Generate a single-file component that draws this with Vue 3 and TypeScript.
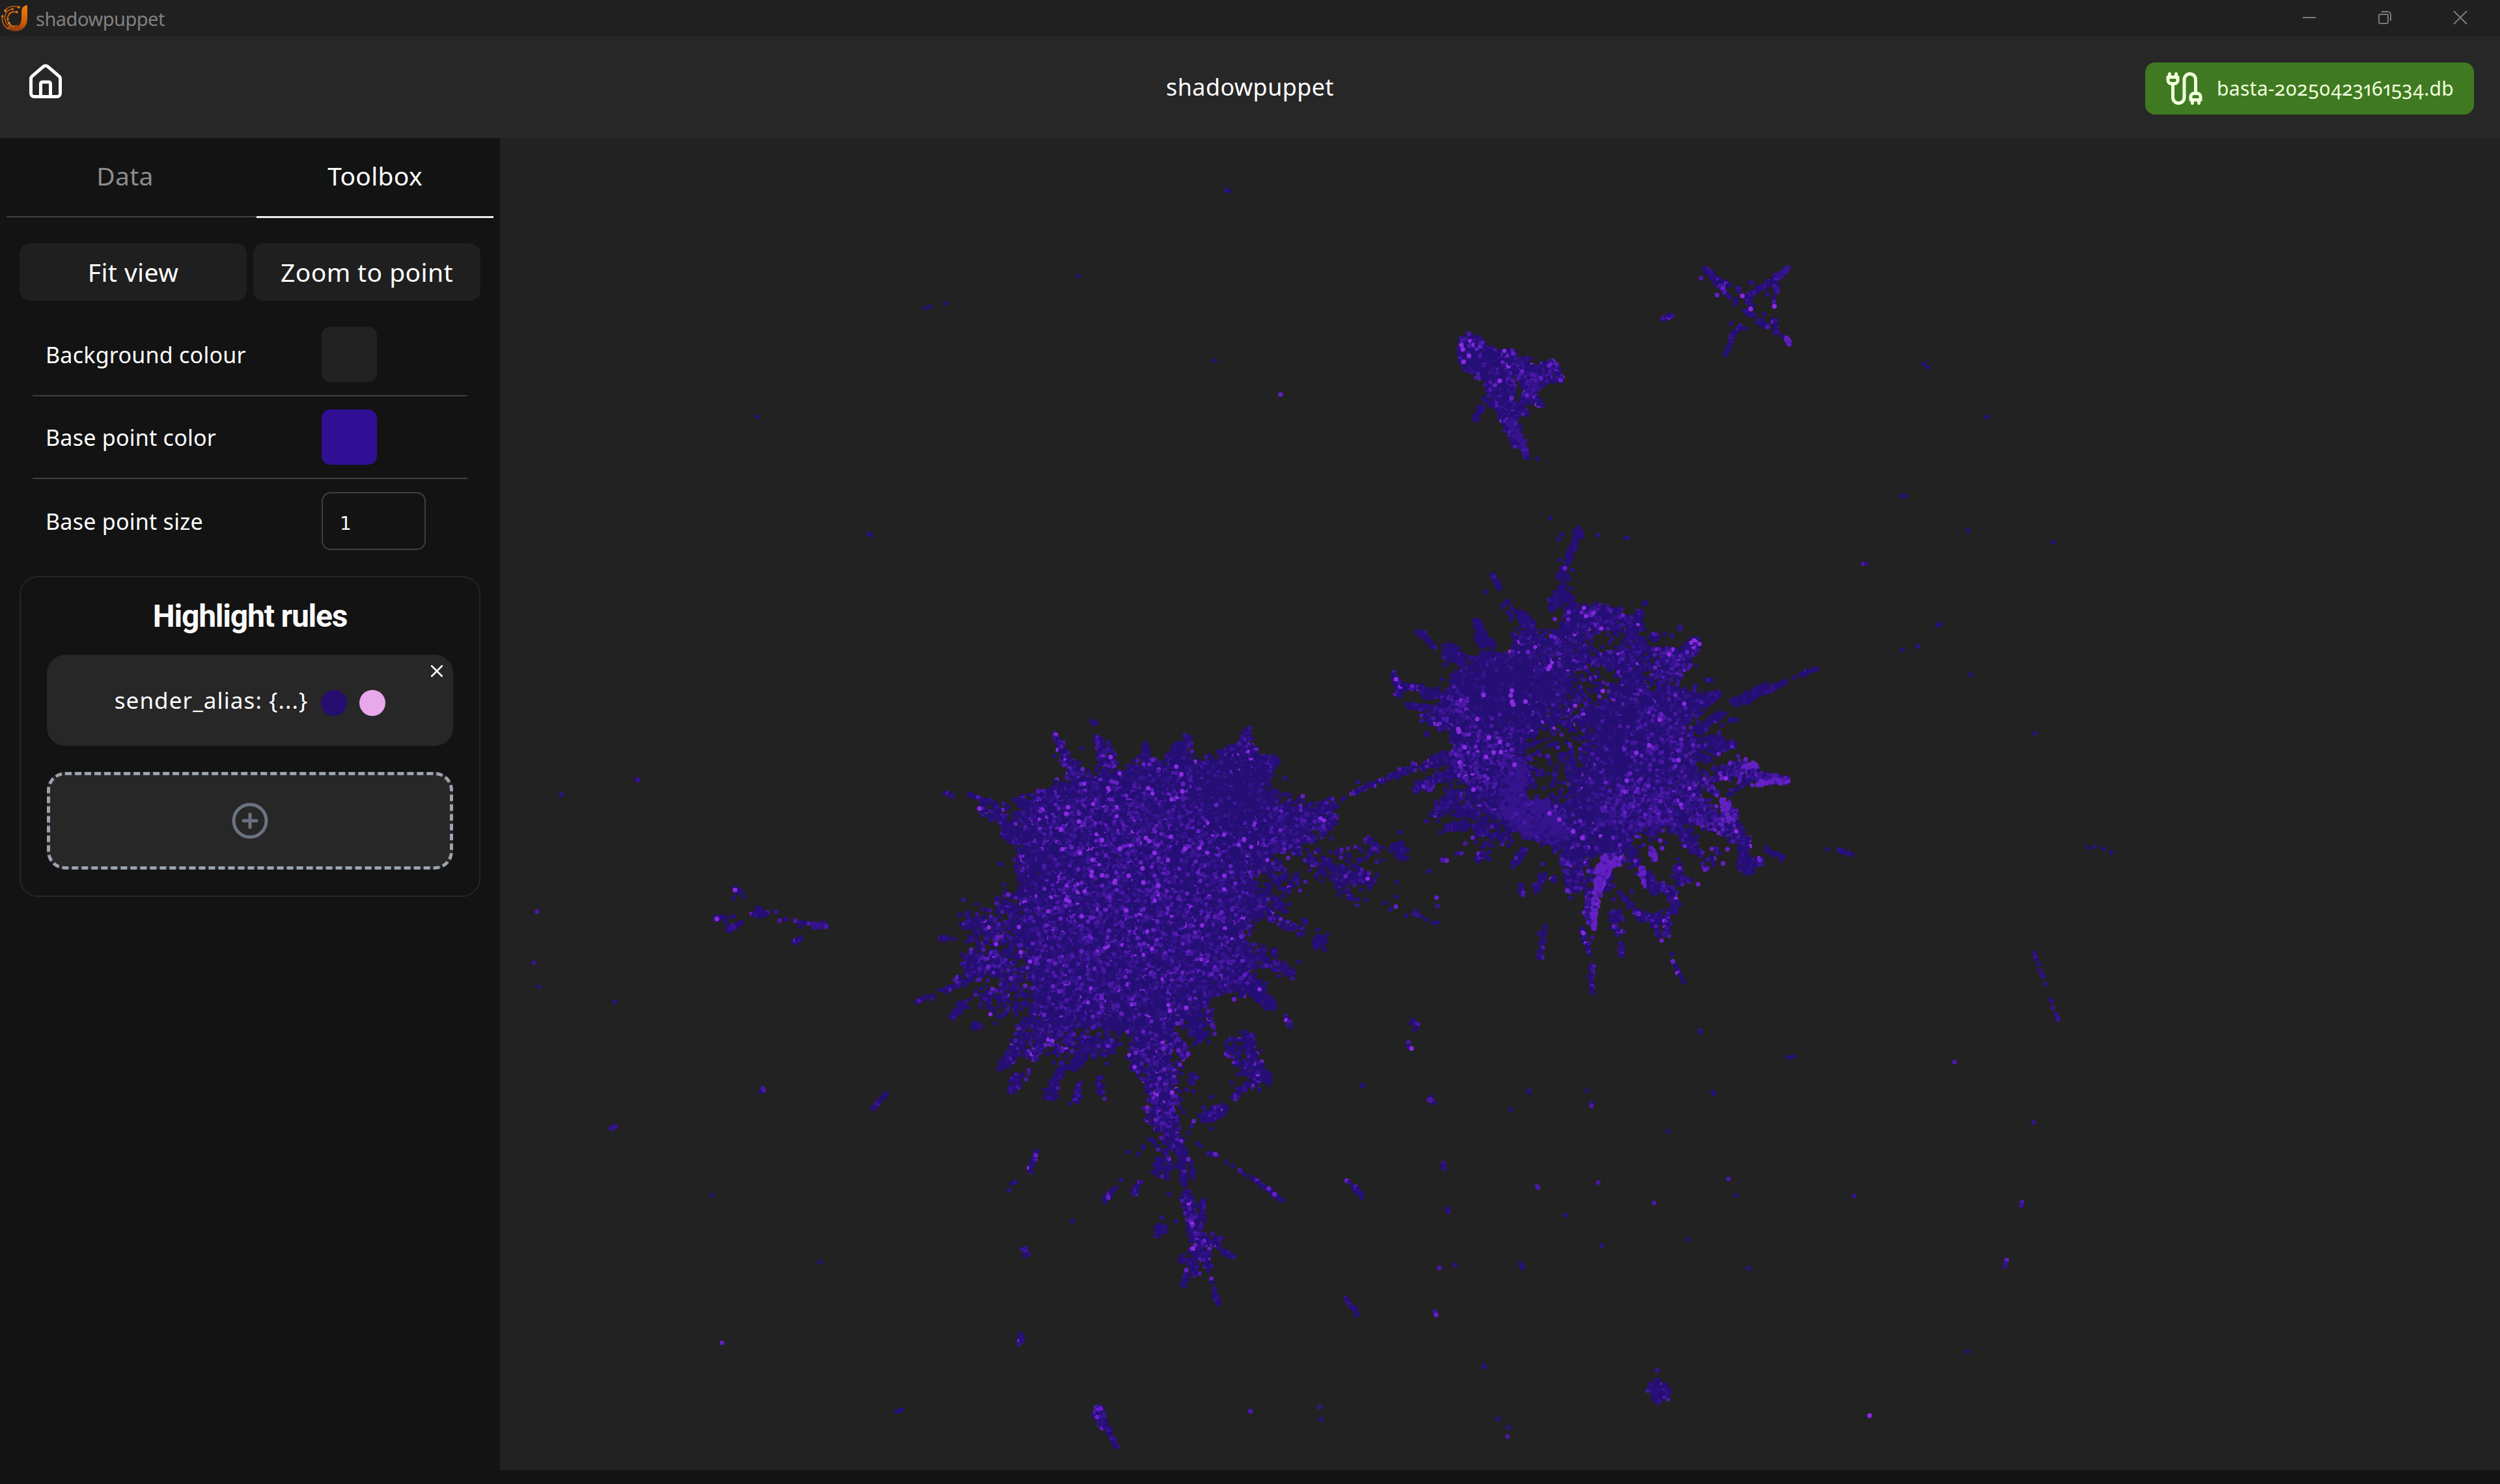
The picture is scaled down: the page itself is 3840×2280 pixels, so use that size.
<script setup lang="ts">
import { onMounted, ref } from 'vue'

interface Rule {
  label: string
  from: string
  to: string
}

const tabs = ['Data', 'Toolbox']
const activeTab = ref('Toolbox')
const pointSize = ref('1')
const rules = ref<Rule[]>([{ label: 'sender_alias: {...}', from: '#250e70', to: '#e8a8ea' }])
const canvas = ref<HTMLCanvasElement | null>(null)

const ORIGIN_X = 768
const ORIGIN_Y = 212
const COLORS = ['#250f75', '#2e1180', '#36148e', '#4a18a6', '#6320c2', '#8a2be2']
// share of each colour for increasing highlight levels
const LEVELS = [
  [0.86, 0.1, 0.03, 0.01, 0, 0],
  [0.66, 0.14, 0.1, 0.07, 0.02, 0.01],
  [0.5, 0.12, 0.15, 0.15, 0.055, 0.025],
  [0.3, 0.12, 0.25, 0.24, 0.08, 0.01],
  [0, 0, 0.04, 0.16, 0.78, 0.02],
  [0.04, 0.2, 0.7, 0.06, 0, 0],
]

let seed = 20250423
function rnd(): number {
  seed = (seed + 0x6d2b79f5) | 0
  let t = Math.imul(seed ^ (seed >>> 15), 1 | seed)
  t = (t + Math.imul(t ^ (t >>> 7), 61 | t)) ^ t
  return ((t ^ (t >>> 14)) >>> 0) / 4294967296
}
function gauss(): number {
  return (rnd() + rnd() + rnd() + rnd() - 2) * 1.7
}
function pick(level: number): string {
  let r = rnd()
  const shares = LEVELS[level]
  for (let i = 0; i < shares.length; i++) {
    r -= shares[i]
    if (r <= 0) return COLORS[i]
  }
  return COLORS[0]
}

type Pt = [number, number]

/** Local frame: cluster data are stored relative to an origin and a scale. */
class Frame {
  constructor(
    private c: CanvasRenderingContext2D,
    private ox: number,
    private oy: number,
    private sx: number,
    private sy: number,
  ) {}

  dot(px: number, py: number, color: string, r = 3.3) {
    this.c.fillStyle = color
    this.c.beginPath()
    this.c.arc(px, py, r, 0, 6.3)
    this.c.fill()
  }

  // triples of x, y, colour index
  points(list: number[]) {
    for (let i = 0; i < list.length; i += 3)
      this.dot(this.ox + list[i] * this.sx, this.oy + list[i + 1] * this.sy, COLORS[list[i + 2]], 3.6)
  }

  area(poly: Pt[], count: number, level: number, jitter = 3, holes: number[][] = []) {
    const xs = poly.map((p) => p[0])
    const ys = poly.map((p) => p[1])
    const x0 = Math.min(...xs)
    const x1 = Math.max(...xs)
    const y0 = Math.min(...ys)
    const y1 = Math.max(...ys)
    let n = 0
    while (n < count) {
      const x = x0 + rnd() * (x1 - x0)
      const y = y0 + rnd() * (y1 - y0)
      let inside = false
      for (let i = 0, j = poly.length - 1; i < poly.length; j = i++) {
        const [ax, ay] = poly[i]
        const [bx, by] = poly[j]
        if (ay > y !== by > y && x < ((bx - ax) * (y - ay)) / (by - ay) + ax) inside = !inside
      }
      if (!inside) continue
      n++
      let keep = 1
      for (const [hx, hy, rx, ry, k] of holes) {
        const d = ((x - hx) / rx) ** 2 + ((y - hy) / ry) ** 2
        if (d < 1) keep = Math.min(keep, k)
        else if (d < 1.7) keep = Math.min(keep, k + (1 - k) * (d - 1))
      }
      if (rnd() > keep) continue
      this.dot(this.ox + x * this.sx + gauss() * jitter, this.oy + y * this.sy + gauss() * jitter, pick(level))
    }
  }

  // each row: x1, y1, x2, y2, start spread, end spread, count, level
  rays(rows: number[][], spread = 0.74) {
    for (const [x1, y1, x2, y2, w1, w2, n, level] of rows) {
      for (let i = 0; i < n; i++) {
        const t = n < 2 ? 0 : Math.min(1, Math.max(0, (i + rnd() - 0.5) / (n - 1)))
        const w = (w1 + (w2 - w1) * t) * spread
        this.dot(
          this.ox + (x1 + (x2 - x1) * t) * this.sx + gauss() * w,
          this.oy + (y1 + (y2 - y1) * t) * this.sy + gauss() * w,
          pick(level),
        )
      }
    }
  }
}

function draw(c: CanvasRenderingContext2D) {
  c.translate(-ORIGIN_X, -ORIGIN_Y)

  // lower-left cluster
  const left = new Frame(c, 1380, 1060, 0.5485, 0.4209)
  left.rays([
    [438, 160, 480, 280, 2, 6, 60, 2], [480, 270, 520, 350, 7, 12, 90, 2],
    [557, 175, 590, 320, 3, 11, 130, 2], [585, 190, 620, 320, 2, 8, 40, 1],
    [692, 195, 692, 290, 2, 10, 70, 0], [812, 170, 790, 270, 3, 12, 90, 1],
    [775, 200, 770, 290, 3, 9, 60, 0], [980, 145, 945, 290, 4, 12, 160, 2],
    [1000, 210, 985, 280, 2, 8, 40, 1], [1052, 250, 1000, 330, 6, 10, 150, 0],
    [545, 120, 553, 124, 2, 2, 8, 0], [130, 375, 152, 388, 2, 2, 8, 1],
    [195, 380, 300, 440, 2, 7, 40, 1], [225, 435, 330, 490, 4, 8, 70, 2],
    [400, 385, 400, 450, 7, 8, 110, 3], [340, 395, 370, 450, 6, 9, 60, 1],
    [1020, 370, 1110, 430, 12, 12, 70, 0], [1215, 420, 1120, 480, 6, 14, 160, 1],
    [1225, 470, 1130, 540, 4, 16, 110, 2], [1240, 400, 1290, 365, 2, 2, 6, 1],
  ])
  left.rays([
    [1150, 600, 1260, 690, 12, 14, 90, 1], [1230, 590, 1340, 610, 10, 6, 24, 1],
    [1240, 690, 1325, 695, 12, 8, 90, 1], [1315, 545, 1340, 575, 4, 4, 12, 1],
    [1030, 650, 1110, 710, 14, 14, 70, 1], [1220, 720, 1290, 770, 8, 6, 16, 0],
    [1390, 575, 1415, 610, 6, 6, 40, 0], [1405, 560, 1408, 600, 2, 4, 12, 0],
    [1010, 740, 1080, 800, 12, 8, 60, 0], [1020, 810, 1130, 885, 6, 5, 50, 1],
    [1140, 840, 1140, 850, 3, 3, 8, 0], [1165, 930, 1190, 900, 5, 5, 40, 0],
    [960, 930, 1105, 1040, 12, 4, 110, 1], [1052, 945, 1052, 965, 2, 2, 8, 0],
    [960, 1050, 1050, 1160, 14, 4, 180, 0], [1085, 1190, 1098, 1228, 2, 2, 12, 1],
    [980, 1260, 1000, 1430, 5, 10, 190, 1], [1025, 1395, 1035, 1430, 4, 4, 40, 0],
    [930, 1280, 980, 1400, 12, 12, 60, 1], [940, 1490, 975, 1450, 5, 4, 22, 1],
    [290, 760, 330, 830, 12, 10, 60, 1], [175, 855, 240, 850, 4, 6, 36, 1],
    [200, 820, 330, 880, 12, 14, 80, 1], [210, 900, 350, 900, 12, 16, 90, 2],
    [190, 980, 330, 1000, 8, 18, 170, 2], [52, 1140, 100, 1118, 2, 3, 14, 0],
    [115, 910, 135, 910, 3, 3, 12, 0], [125, 1100, 220, 1040, 3, 6, 44, 1],
    [200, 1040, 300, 990, 7, 14, 70, 2], [150, 1195, 195, 1135, 3, 5, 34, 0],
    [210, 1235, 228, 1220, 3, 3, 12, 0], [230, 1130, 380, 1040, 8, 18, 110, 1],
    [265, 1180, 380, 1120, 8, 14, 50, 1], [290, 1380, 400, 1180, 4, 16, 170, 1],
    [312, 1470, 350, 1405, 4, 6, 30, 1], [375, 1340, 440, 1210, 5, 14, 120, 2],
    [418, 1492, 460, 1370, 4, 7, 80, 0], [460, 1310, 480, 1220, 12, 18, 110, 2],
    [490, 1380, 540, 1260, 4, 12, 80, 0], [495, 1505, 508, 1435, 4, 2, 36, 1],
    [540, 1335, 545, 1280, 4, 8, 20, 1], [560, 1415, 572, 1480, 3, 4, 20, 1],
    [580, 1330, 600, 1250, 8, 12, 50, 1], [660, 1380, 690, 1250, 6, 14, 90, 1],
    [755, 1240, 805, 1335, 5, 5, 90, 3], [850, 1270, 820, 1180, 5, 14, 130, 0],
    [878, 1240, 860, 1140, 4, 6, 24, 2], [720, 1270, 740, 1568, 19, 14, 600, 2],
    [870, 1560, 905, 1530, 7, 6, 50, 0], [820, 1430, 825, 1410, 4, 4, 12, 0],
  ], 0.82)
  left.area(
    [
      [470, 340], [560, 320], [640, 310], [660, 275], [760, 265], [780, 235], [830, 265], [880, 265], [950, 200],
      [1000, 240], [1050, 255], [1045, 290], [1010, 350], [1020, 400], [1110, 440], [1170, 440], [1140, 500],
      [1120, 560], [1050, 590], [1010, 650], [985, 690], [1000, 740], [1030, 780], [1000, 830], [960, 890],
      [970, 960], [1000, 1000], [985, 1060], [1000, 1100], [930, 1100], [890, 1090], [860, 1140], [820, 1180],
      [780, 1220], [750, 1270], [690, 1270], [620, 1225], [520, 1220], [440, 1220], [370, 1170], [390, 1100],
      [380, 1020], [350, 960], [330, 900], [350, 830], [335, 760], [340, 690], [330, 640], [350, 580],
      [320, 530], [360, 490], [320, 465], [370, 440], [390, 400], [440, 385],
    ],
    17500, 1, 5,
  )
  left.area([[440, 460], [900, 480], [940, 800], [860, 1080], [740, 1180], [430, 1150], [380, 900], [430, 750]], 4200, 2, 16)
  left.area([[400, 380], [600, 330], [850, 320], [860, 500], [520, 520], [360, 520]], 1100, 2, 14)
  left.area([[1000, 500], [1120, 450], [1120, 570], [1030, 600]], 220, 2, 10)
  left.area([[300, 480], [380, 540], [320, 560], [290, 530]], 150, 0, 2)
  left.area([[840, 300], [1000, 290], [1010, 420], [940, 520], [860, 480]], 350, 0, 14)
  left.points([
    1132, 388, 4, 1278, 376, 4, 1288, 336, 0, 1405, 520, 0, 1485, 662, 1, 1395, 702, 0, 1395, 755, 0, 1393, 791, 4,
    1362, 777, 0, 1378, 802, 1, 1507, 758, 4, 1510, 789, 2, 1523, 622, 3, 1535, 623, 4, 1527, 615, 0, 285, 635, 0,
    288, 636, 1, 182, 765, 2, 1300, 1446, 1, 1297, 1443, 0, 792, 308, 5, 795, 370, 5, 645, 678, 5, 570, 677, 5,
    686, 703, 5, 683, 651, 5, 913, 678, 5, 968, 545, 5, 803, 580, 5, 763, 536, 5, 638, 805, 5, 513, 826, 5,
    760, 1171, 5, 806, 1160, 5, 710, 945, 5, 455, 510, 5, 570, 548, 5, 717, 595, 5, 843, 577, 5, 607, 697, 5,
    940, 1130, 4, 1195, 948, 0, 1122, 992, 0, 1174, 875, 0, 156, 909, 0, 437, 240, 0, 515, 213, 0, 1083, 323, 1,
    1440, 1205, 0, 1436, 1218, 0, 1448, 1216, 2, 1455, 1220, 3, 1450, 1232, 0, 1446, 1240, 0, 1428, 1287, 3,
    1427, 1298, 0, 1430, 1304, 1, 1437, 1309, 5, 1490, 1490, 1, 1486, 1496, 3, 1494, 1500, 3, 1498, 1506, 0,
    1422, 824, 0, 1443, 818, 2, 1448, 806, 1, 1455, 822, 2, 1465, 828, 0, 1478, 838, 0, 1497, 850, 0, 1509, 849, 0,
    543, 620, 5, 508, 595, 5, 620, 580, 5, 693, 540, 5, 702, 552, 5, 727, 714, 5, 605, 703, 5, 583, 680, 4, 540, 678, 5,
    470, 452, 5, 475, 428, 5, 398, 442, 4, 594, 245, 5, 778, 280, 5, 797, 343, 4, 252, 1010, 4, 343, 957, 5, 355, 1080, 4,
    308, 747, 4, 505, 480, 5, 890, 420, 4, 227, 433, 5, 315, 1053, 4, 960, 900, 4, 433, 1082, 4,
  ])

  // stalk below the cluster and its surroundings
  const stalk = new Frame(c, 1380, 1600, 0.5485, 0.4209)
  stalk.rays([
    [735, 220, 770, 350, 10, 9, 170, 2], [770, 340, 795, 420, 9, 5, 100, 1], [792, 400, 800, 525, 4, 4, 60, 0],
    [740, 370, 750, 460, 12, 12, 30, 1], [720, 485, 728, 440, 3, 4, 24, 0], [750, 497, 753, 455, 3, 2, 20, 0],
    [822, 450, 826, 500, 3, 2, 12, 0], [805, 555, 825, 640, 7, 6, 60, 1], [850, 580, 855, 650, 3, 3, 20, 1],
    [822, 630, 850, 790, 8, 8, 170, 2], [870, 715, 895, 745, 6, 5, 26, 1], [905, 765, 938, 790, 2, 3, 20, 1],
    [850, 770, 875, 820, 6, 3, 30, 1], [825, 810, 830, 850, 6, 3, 44, 1], [800, 888, 808, 850, 3, 2, 24, 0],
    [790, 803, 795, 785, 3, 2, 12, 0], [885, 920, 898, 960, 2, 2, 20, 0], [725, 705, 740, 675, 5, 4, 26, 0],
    [578, 577, 605, 540, 3, 1, 22, 1], [658, 560, 672, 520, 3, 2, 20, 1], [370, 475, 386, 400, 3, 1, 30, 1],
    [357, 760, 356, 785, 3, 2, 14, 2], [342, 1070, 343, 1100, 2, 3, 16, 1], [560, 1335, 572, 1400, 5, 5, 60, 2],
    [572, 1380, 612, 1482, 3, 1, 60, 1], [1252, 935, 1270, 972, 1, 1, 16, 1], [1280, 970, 1284, 1000, 1, 2, 10, 1],
    [1275, 530, 1300, 567, 2, 3, 28, 1], [995, 500, 1073, 580, 2, 2, 44, 1], [870, 408, 892, 418, 2, 1, 9, 1],
    [870, 275, 908, 240, 6, 5, 60, 1], [845, 270, 860, 285, 3, 3, 14, 0],
    [1525, 445, 1525, 465, 1, 2, 8, 1], [317, 145, 335, 122, 3, 3, 12, 1],
  ])
  stalk.points([
    812, 430, 4, 918, 443, 0, 937, 455, 0, 955, 470, 3, 958, 475, 2, 968, 483, 0, 981, 492, 0, 887, 411, 4,
    1037, 537, 4, 1053, 557, 4, 837, 372, 0, 846, 382, 0, 827, 291, 4, 822, 308, 1, 812, 334, 0, 877, 318, 0,
    641, 404, 1, 671, 411, 0, 686, 382, 1, 685, 390, 0, 702, 358, 0, 716, 367, 0, 623, 506, 1, 610, 533, 0,
    588, 570, 4, 680, 514, 1, 758, 557, 0, 487, 655, 0, 778, 657, 1, 738, 643, 1, 328, 513, 1, 316, 519, 0,
    310, 544, 1, 825, 756, 5, 806, 835, 4, 869, 838, 0, 876, 866, 4, 879, 880, 0, 886, 902, 1, 384, 416, 4,
    1259, 511, 4, 1255, 508, 4, 1262, 514, 1, 1515, 826, 3, 1560, 817, 1, 1535, 610, 0, 1539, 620, 2,
    1502, 988, 3, 1506, 998, 4, 1179, 1335, 2, 1183, 1380, 1, 985, 1350, 3, 2, 1350, 1, 766, 187, 5, 697, 241, 4,
    877, 203, 0, 828, 183, 0, 808, 176, 1, 854, 241, 1, 790, 211, 0, 726, 318, 0, 726, 325, 0, 905, 718, 1,
    556, 1372, 4, 566, 1340, 4, 800, 595, 0, 853, 586, 1,
  ])

  // right cluster
  const right = new Frame(c, 2080, 780, 0.4847, 0.4974)
  right.rays([
    [712, 68, 675, 170, 3, 3, 100, 0], [712, 68, 722, 90, 2, 1, 12, 0], [665, 185, 655, 215, 4, 5, 26, 0],
    [670, 235, 640, 300, 5, 6, 40, 0], [640, 270, 630, 310, 4, 6, 40, 0], [680, 270, 700, 330, 4, 10, 50, 0],
    [438, 208, 463, 248, 3, 2, 30, 0], [488, 288, 472, 302, 2, 2, 8, 0], [490, 315, 500, 345, 3, 2, 6, 0],
    [525, 325, 560, 370, 4, 7, 100, 0], [390, 350, 412, 425, 3, 7, 110, 0], [410, 400, 440, 425, 5, 3, 30, 0],
    [205, 387, 222, 395, 3, 3, 18, 0], [222, 395, 257, 436, 2, 1, 16, 0], [300, 438, 340, 475, 7, 6, 90, 0],
    [125, 515, 150, 580, 4, 5, 44, 1], [135, 540, 175, 560, 3, 3, 14, 1], [185, 550, 290, 590, 4, 6, 70, 1],
    [170, 612, 245, 618, 3, 3, 34, 0], [222, 640, 320, 680, 6, 10, 60, 1], [228, 698, 232, 700, 2, 1, 5, 0],
    [120, 828, 250, 790, 4, 6, 50, 2], [0, 880, 120, 828, 2, 4, 34, 1], [250, 770, 320, 780, 7, 12, 60, 1],
    [190, 872, 330, 810, 4, 9, 120, 1], [230, 865, 240, 855, 5, 5, 20, 3], [270, 945, 320, 880, 7, 9, 90, 1],
    [290, 990, 345, 978, 3, 6, 50, 0], [380, 1010, 480, 1010, 14, 13, 70, 1], [385, 1080, 420, 1070, 4, 5, 30, 1],
    [300, 910, 420, 970, 16, 14, 90, 0], [540, 1050, 510, 1105, 4, 5, 24, 1], [600, 1135, 575, 1180, 4, 3, 34, 1],
    [525, 1170, 535, 1195, 3, 2, 14, 1], [633, 1140, 633, 1155, 3, 2, 9, 1], [690, 1110, 690, 1180, 12, 6, 60, 1],
    [725, 1090, 740, 1160, 14, 12, 60, 2], [675, 1080, 665, 1100, 6, 4, 30, 3], [710, 1165, 708, 1185, 3, 3, 12, 3],
    [800, 1100, 800, 1185, 5, 4, 60, 1], [740, 1200, 750, 1290, 4, 5, 50, 3],
    [823, 1055, 785, 1130, 8, 6, 200, 4], [838, 1065, 842, 1098, 5, 4, 50, 4], [785, 1120, 765, 1220, 6, 3, 130, 4],
    [763, 1210, 757, 1300, 3, 3, 50, 4], [830, 980, 835, 1060, 14, 8, 130, 3],
    [870, 1030, 880, 1100, 5, 8, 40, 1], [942, 1055, 952, 1085, 3, 3, 34, 4], [910, 1110, 927, 1165, 3, 3, 44, 4],
    [935, 1130, 950, 1190, 4, 4, 60, 1], [970, 1165, 1000, 1190, 6, 5, 30, 2], [1000, 1180, 1020, 1245, 6, 4, 60, 1],
    [1025, 1100, 1030, 1165, 6, 6, 26, 1], [1040, 1145, 1065, 1150, 3, 2, 10, 1], [890, 1100, 900, 1090, 4, 4, 12, 2],
    [840, 1185, 905, 1260, 2, 5, 30, 1], [905, 1260, 990, 1280, 4, 6, 60, 1], [985, 1250, 995, 1315, 4, 3, 36, 2],
    [950, 1290, 970, 1325, 4, 3, 16, 1], [823, 1255, 835, 1300, 6, 7, 50, 2], [848, 1355, 850, 1385, 3, 2, 18, 2],
    [603, 1290, 588, 1395, 3, 3, 26, 1], [720, 1300, 745, 1375, 3, 3, 24, 1], [752, 1410, 755, 1502, 2, 2, 36, 1],
    [1010, 1405, 1043, 1462, 1, 2, 14, 1], [1040, 1000, 1090, 1065, 9, 5, 100, 1], [1110, 1100, 1150, 1060, 10, 8, 16, 2],
    [1080, 930, 1180, 990, 12, 10, 200, 3], [1190, 935, 1195, 990, 8, 9, 90, 3], [1165, 905, 1190, 930, 3, 5, 18, 4],
    [1185, 945, 1185, 985, 7, 7, 26, 4],
    [1190, 990, 1245, 1040, 9, 6, 90, 2], [1230, 1040, 1245, 1120, 6, 8, 100, 1], [1250, 1120, 1290, 1085, 7, 4, 34, 2],
    [1150, 825, 1230, 800, 7, 9, 120, 2], [1240, 797, 1275, 800, 4, 3, 50, 4], [1230, 830, 1375, 842, 9, 4, 170, 3],
    [1270, 850, 1370, 843, 5, 2, 40, 4], [1190, 880, 1225, 860, 3, 3, 8, 2], [1100, 835, 1150, 880, 10, 5, 40, 3],
    [1200, 605, 1300, 550, 4, 3, 70, 0], [1235, 600, 1280, 575, 4, 3, 26, 0], [1295, 575, 1368, 535, 2, 2, 44, 0],
    [1413, 517, 1465, 496, 2, 1, 26, 0], [1070, 700, 1170, 635, 6, 4, 70, 0], [1190, 660, 1210, 652, 2, 2, 10, 0],
    [1140, 755, 1205, 728, 5, 3, 60, 1], [1080, 740, 1160, 715, 10, 7, 60, 0], [1095, 780, 1125, 775, 6, 3, 20, 0],
    [1080, 410, 1040, 480, 5, 11, 120, 2], [1155, 578, 1080, 615, 4, 9, 100, 1], [1120, 535, 1125, 530, 3, 2, 8, 0],
    [920, 292, 924, 296, 2, 1, 6, 0], [905, 320, 890, 380, 3, 8, 50, 0], [1030, 370, 1032, 373, 2, 1, 5, 1],
    [940, 400, 960, 400, 5, 3, 20, 1], [1305, 1055, 1360, 1085, 3, 3, 20, 1], [1535, 1055, 1568, 1070, 2, 2, 10, 1],
  ])
  right.area(
    [
      [320, 510], [390, 500], [400, 450], [490, 460], [510, 400], [550, 370], [600, 400], [650, 380], [680, 310],
      [740, 330], [770, 300], [830, 325], [890, 345], [900, 400], [960, 440], [1010, 450], [1050, 440],
      [1020, 520], [1010, 570], [1080, 570], [1110, 600], [1060, 640], [1040, 690], [1080, 740], [1080, 800],
      [1100, 850], [1080, 900], [1100, 950], [1070, 980], [1040, 1000], [960, 980], [880, 1010], [840, 1050],
      [740, 1080], [690, 1080], [640, 1040], [560, 1020], [470, 960], [400, 930], [350, 890], [370, 850],
      [330, 820], [300, 790], [330, 740], [310, 690], [270, 670], [270, 620], [300, 570], [330, 560],
    ],
    12500, 1, 5,
    [
      [795, 415, 62, 38, 0.1], [745, 430, 20, 22, 0.03], [760, 545, 70, 55, 0.15], [600, 465, 12, 16, 0.1],
      [640, 705, 60, 38, 0.12], [730, 740, 40, 60, 0.14], [610, 770, 65, 60, 0.1], [580, 880, 42, 28, 0.04],
      [640, 860, 60, 50, 0.12], [940, 500, 28, 70, 0.25], [680, 610, 45, 28, 0.3], [470, 480, 12, 12, 0.3],
      [350, 900, 20, 20, 0.3], [1060, 1000, 25, 18, 0.2], [850, 390, 14, 28, 0.15], [1000, 545, 30, 14, 0.4],
    ],
  )
  right.area([[350, 500], [520, 480], [620, 520], [600, 600], [480, 650], [350, 660], [320, 560]], 1000, 0, 12)
  right.area([[820, 600], [960, 640], [1000, 720], [960, 860], [830, 840], [760, 720]], 900, 0, 16)
  right.area([[480, 790], [540, 790], [540, 900], [640, 940], [680, 1010], [640, 1030], [540, 1000], [470, 940]], 800, 5, 6)
  right.area([[970, 450], [1040, 460], [1030, 520], [980, 530]], 110, 3, 6)
  right.area([[690, 320], [840, 320], [830, 360], [720, 380]], 150, 2, 6)
  right.area([[330, 680], [480, 700], [500, 800], [420, 900], [330, 820]], 260, 3, 10)
  right.area([[290, 580], [350, 570], [360, 650], [290, 650]], 90, 3, 5)
  right.area([[800, 870], [1100, 850], [1090, 950], [860, 1020], [780, 960]], 420, 3, 12)
  right.area([[860, 640], [1060, 600], [1060, 800], [880, 860]], 190, 3, 12)
  right.points([
    622, 33, 0, 658, 83, 0, 648, 97, 1, 774, 85, 1, 862, 93, 0, 866, 94, 1, 650, 161, 1, 692, 192, 1, 668, 187, 4,
    418, 261, 1, 687, 249, 0, 133, 530, 5, 285, 462, 2, 287, 487, 0, 372, 463, 1, 636, 344, 4, 680, 323, 4,
    410, 579, 5, 500, 565, 5, 496, 580, 5, 500, 600, 5, 504, 608, 5, 543, 599, 5, 330, 684, 5, 332, 692, 5,
    427, 710, 5, 462, 723, 5, 442, 756, 5, 465, 755, 5, 350, 740, 5, 390, 653, 5, 334, 787, 5, 508, 794, 5,
    418, 770, 5, 378, 871, 5, 788, 566, 5, 968, 655, 5, 894, 757, 5, 935, 734, 5, 864, 843, 5, 619, 944, 5,
    650, 963, 5, 694, 1000, 5, 723, 1020, 5, 620, 490, 5, 615, 498, 5, 551, 446, 4, 998, 453, 5, 1028, 780, 5,
    1178, 836, 5, 1285, 1088, 4, 1090, 1163, 4, 1169, 1099, 4, 1183, 1055, 4, 1500, 1055, 0, 1394, 524, 0,
    974, 1337, 4, 902, 1255, 4, 1008, 1378, 0, 1010, 1401, 4, 755, 1328, 2, 745, 1346, 2, 835, 1320, 1, 843, 1345, 1,
    822, 1210, 1, 822, 1168, 1, 880, 1186, 1, 675, 1183, 4, 686, 1205, 1, 585, 1315, 1, 145, 1003, 1, 229, 968, 1,
    250, 940, 0, 274, 1003, 0, 325, 1068, 1, 340, 1067, 3, 352, 1037, 3, 280, 1088, 3, 293, 1090, 4, 238, 1122, 1,
    90, 1050, 0, 36, 1212, 0, 97, 1220, 0, 12, 847, 1, 598, 1100, 2, 976, 1052, 4, 970, 1028, 4, 1112, 1118, 4,
    1167, 672, 0, 984, 390, 0, 1007, 396, 1, 878, 340, 2,
  ])

  // upper clusters
  const top = new Frame(c, 2100, 360, 0.4464, 0.3333)
  top.area(
    [
      [320, 490], [350, 460], [380, 480], [410, 520], [450, 540], [510, 545], [520, 600], [490, 640], [510, 700],
      [500, 760], [520, 800], [510, 870], [480, 900], [450, 810], [430, 780], [410, 700], [380, 650], [330, 620],
      [315, 550],
    ],
    1500, 1, 2,
  )
  top.area([[530, 570], [560, 600], [640, 590], [665, 655], [620, 680], [590, 720], [570, 770], [530, 790], [540, 700], [500, 640]], 330, 2, 2.5)
  top.area([[545, 680], [600, 670], [570, 750], [540, 740]], 50, 3, 2)
  top.rays([
    [480, 850, 508, 978, 6, 1, 70, 1], [500, 860, 552, 1030, 5, 1.5, 130, 5], [640, 590, 635, 640, 4, 4, 50, 3],
    [655, 640, 668, 670, 4, 2, 40, 3], [575, 750, 598, 785, 4, 3, 34, 2], [370, 855, 395, 790, 3, 4, 28, 0],
    [530, 780, 545, 830, 5, 4, 16, 1], [400, 750, 425, 800, 2, 3, 8, 0], [330, 490, 390, 510, 4, 5, 60, 2],
    [1165, 162, 1200, 215, 2, 3, 50, 1], [1200, 210, 1245, 235, 3, 2, 26, 1], [1215, 240, 1245, 290, 2, 2, 20, 2],
    [1448, 155, 1400, 210, 2, 2.5, 60, 5], [1405, 205, 1310, 285, 2.5, 3, 80, 1], [1405, 210, 1410, 265, 2, 2, 24, 1],
    [1398, 285, 1402, 330, 1, 1, 7, 2], [1272, 245, 1282, 265, 1, 1, 6, 1], [1272, 300, 1264, 322, 1, 1, 8, 0],
    [1305, 280, 1312, 310, 2, 2, 20, 1], [1315, 310, 1325, 340, 2, 2, 12, 1], [1298, 348, 1315, 370, 2, 2, 18, 1],
    [1320, 360, 1335, 380, 1, 1, 6, 1], [1345, 398, 1380, 425, 2, 2, 24, 1], [1400, 392, 1410, 455, 2, 2, 34, 1],
    [1445, 480, 1453, 508, 2, 1, 24, 4], [1235, 552, 1262, 450, 1.5, 1.5, 44, 1], [1262, 460, 1285, 420, 1, 2, 16, 1],
    [1018, 390, 1045, 375, 2, 2, 24, 1],
  ])
  top.points([
    324, 510, 5, 329, 530, 5, 350, 560, 5, 332, 587, 5, 456, 675, 5, 496, 755, 4, 585, 1035, 0, 1149, 202, 3,
    1204, 280, 4, 1291, 284, 5, 1401, 332, 5, 1318, 222, 0, 1324, 222, 1, 1320, 344, 5, 1223, 248, 4, 1377, 276, 1,
    1365, 368, 0, 1428, 467, 0, 1252, 411, 0, 1300, 434, 1, 1290, 432, 0, 1377, 428, 3, 563, 574, 0, 550, 572, 1,
    551, 820, 1, 525, 882, 0, 350, 458, 3, 403, 752, 0, 665, 672, 4,
  ])

  // small groups on the left
  const west = new Frame(c, 780, 1180, 0.4082, 0.4082)
  west.rays([
    [778, 570, 800, 565, 2, 2, 14, 1], [805, 560, 822, 562, 1, 1, 7, 0], [830, 608, 878, 585, 3, 2, 44, 1],
    [940, 530, 955, 550, 2, 3, 24, 0], [920, 550, 978, 548, 2, 2, 28, 1], [1095, 578, 1115, 582, 1, 1, 8, 0],
    [1150, 594, 1198, 594, 2, 2, 40, 5], [1078, 652, 1104, 642, 2, 1, 18, 1], [1374, 1282, 1425, 1222, 1, 1, 40, 1],
    [860, 465, 876, 465, 2, 2, 14, 0], [385, 1356, 408, 1350, 1.5, 1.5, 16, 5], [1538, 884, 1548, 878, 1, 1, 8, 1],
  ])
  west.points([
    482, 43, 0, 490, 45, 2, 201, 99, 1, 855, 450, 0, 855, 459, 5, 850, 490, 0, 886, 484, 0, 110, 540, 3, 98, 733, 2,
    117, 824, 1, 404, 880, 1, 787, 568, 5, 845, 559, 1, 850, 559, 0, 820, 580, 0, 1010, 541, 2, 1023, 574, 3,
    1043, 569, 0, 1049, 569, 1, 1082, 575, 3, 1132, 585, 3, 1102, 597, 0, 1189, 581, 1, 1198, 597, 3, 951, 1219, 0,
    960, 1206, 3, 963, 1213, 3,
  ])

  // lower right
  const south = new Frame(c, 2100, 1500, 0.7015, 0.4974)
  south.rays([
    [630, 1270, 645, 1295, 7, 7, 110, 1], [622, 1262, 635, 1310, 3, 4, 16, 0], [655, 1262, 660, 1285, 2, 2, 8, 0],
    [632, 1248, 636, 1262, 1, 3, 10, 1], [636, 1312, 646, 1308, 1, 1, 5, 2],
  ])
  south.points([
    729, 168, 2, 730, 173, 0, 921, 249, 0, 1286, 265, 3, 140, 373, 0, 138, 380, 3, 143, 385, 3, 147, 390, 0,
    354, 353, 2, 354, 358, 0, 314, 411, 0, 491, 391, 1, 491, 400, 3, 757, 357, 1, 759, 363, 0, 1459, 451, 2,
    658, 478, 0, 167, 580, 1, 166, 588, 0, 168, 594, 1, 372, 648, 3, 374, 653, 3, 506, 637, 3, 791, 626, 3,
    808, 676, 0, 1066, 678, 2, 1434, 698, 3, 1432, 708, 2, 628, 700, 3, 434, 738, 1, 175, 718, 0, 178, 727, 1,
    514, 832, 1, 704, 813, 0, 158, 900, 3, 193, 892, 1, 335, 886, 0, 339, 895, 1, 341, 902, 0, 835, 902, 1,
    1400, 877, 4, 1398, 886, 2, 1396, 897, 1, 149, 1036, 2, 151, 1045, 4, 1315, 1158, 0, 256, 1202, 0, 257, 1208, 1,
    635, 1217, 2, 286, 1367, 1, 310, 1393, 1, 307, 1422, 3, 1100, 1357, 5, 1481, 1, 1, 1485, 24, 1, 1497, 72, 0,
    1499, 78, 1, 1502, 97, 2, 1508, 116, 1, 1511, 127, 2, 1513, 133, 2,
  ])

  // remaining isolated points, in page pixels
  const page = new Frame(c, 0, 0, 1, 1)
  page.points([
    1884, 292, 1, 1888, 294, 0, 1421, 473, 0, 1429, 471, 0, 1452, 466, 0, 1657, 424, 0, 1866, 554, 0, 1967, 606, 4,
    1163, 640, 0, 1334, 820, 1, 1337, 822, 0, 2955, 559, 0, 2962, 564, 1, 3051, 641, 0, 2920, 762, 0, 2926, 762, 1,
    2862, 866, 3, 2866, 866, 1, 3023, 815, 0, 3154, 833, 0, 2976, 961, 0, 2980, 959, 0, 2946, 993, 1, 2922, 998, 0,
    3027, 1036, 0, 3126, 1127, 1, 3207, 1302, 0, 3218, 1301, 1, 3232, 1304, 1, 3243, 1310, 0, 3125, 1464, 1,
    3126, 1470, 2, 3132, 1482, 1, 3134, 1491, 1, 3128, 1475, 0, 3136, 1497, 1, 2755, 1623, 0, 2748, 1625, 0,
    1093, 1836, 0, 1259, 1939, 0, 1109, 2063, 4, 1377, 2168, 0, 1385, 2166, 0, 1921, 2168, 3, 2438, 1676, 0,
    2836, 1309, 0, 2825, 1305, 1, 2845, 1313, 0,
  ])
}

onMounted(() => {
  const context = canvas.value?.getContext('2d')
  if (context) draw(context)
})
</script>

<template>
  <div class="window">
    <div class="titlebar">
      <svg class="logo" viewBox="0 0 40 40">
        <defs>
          <linearGradient id="flame" x1="0.6" y1="0" x2="0.4" y2="1">
            <stop offset="0" stop-color="#f07c06" />
            <stop offset="0.6" stop-color="#cf5a0c" />
            <stop offset="1" stop-color="#8a3a14" />
          </linearGradient>
        </defs>
        <path d="M40 0C34 .5 31 4 31 11C31 20 31.500 27 27 31C22 35 14 34 8 33.500C12 38 17 40 21.500 40C33 40 40 32 40 20Z" fill="url(#flame)" />
        <g fill="none" stroke="#dd6a0a" stroke-width="1.400">
          <path d="M27 3C19 0 10 2 6 8" />
          <path d="M17 6C8 7 4 15 6 23C7 29 11 33 15 35" />
          <path d="M1.500 17C1 27 5 34 12 37" />
          <path d="M24 10.500C15 8.500 8 15 10 25C11 30 15 33 20 34" />
          <path d="M12 27C15 32 20 33 25 31" />
          <path d="M10 21C9 13 16 8 22 11" />
        </g>
        <g fill="#f07c06">
          <circle cx="27" cy="3.200" r="1.900" /><circle cx="6" cy="8.500" r="1.900" /><circle cx="17" cy="6" r="1.700" />
          <circle cx="1.800" cy="17" r="1.800" /><circle cx="24" cy="10.600" r="1.800" /><circle cx="10" cy="21.500" r="1.600" />
          <circle cx="12.200" cy="27" r="1.700" />
        </g>
      </svg>
      <span class="app-name">shadowpuppet</span>
      <div class="controls">
        <svg viewBox="0 0 20 20"><path d="M0 10H20" /></svg>
        <svg viewBox="0 0 20 20">
          <rect x="1" y="5" width="14" height="14" rx="2" />
          <path d="M5 1H14.500A4.500 4.500 0 0 1 19 5.500V15" />
        </svg>
        <svg viewBox="0 0 20 20"><path d="M0 0L20 20M20 0L0 20" /></svg>
      </div>
    </div>

    <header class="header">
      <svg class="home" viewBox="0 0 24 24">
        <path d="M15 21v-8a1 1 0 0 0-1-1h-4a1 1 0 0 0-1 1v8" />
        <path d="M3 10a2 2 0 0 1 .709-1.528l7-5.999a2 2 0 0 1 2.582 0l7 5.999A2 2 0 0 1 21 10v9a2 2 0 0 1-2 2H5a2 2 0 0 1-2-2z" />
      </svg>
      <h1>shadowpuppet</h1>
      <div class="db">
        <svg viewBox="0 0 24 24">
          <path d="M4 9a2 2 0 0 1-2-2V5h6v2a2 2 0 0 1-2 2Z" />
          <path d="M3 5V3M7 5V3" />
          <path d="M19 15V6.500a3.500 3.500 0 0 0-7 0v11a3.500 3.500 0 0 1-7 0V9" />
          <path d="M17 21v-2M21 21v-2" />
          <path d="M22 19h-6v-2a2 2 0 0 1 2-2h2a2 2 0 0 1 2 2Z" />
        </svg>
        <span>basta-20250423161534.db</span>
      </div>
    </header>

    <div class="body">
      <aside class="sidebar">
        <nav class="tabs">
          <button v-for="tab in tabs" :key="tab" class="tab" :class="{ active: tab === activeTab }" @click="activeTab = tab">
            {{ tab }}
          </button>
        </nav>
        <div class="actions">
          <button>Fit view</button>
          <button>Zoom to point</button>
        </div>
        <div class="settings">
          <div class="row"><span class="name">Background colour</span><span class="swatch background"></span></div>
          <div class="row"><span class="name">Base point color</span><span class="swatch base"></span></div>
          <div class="row"><span class="name">Base point size</span><input v-model="pointSize" class="size" /></div>
        </div>
        <section class="rules">
          <h2>Highlight rules</h2>
          <div v-for="rule in rules" :key="rule.label" class="rule">
            <span class="rule-label">{{ rule.label }}</span>
            <span class="dot" :style="{ background: rule.from }"></span>
            <span class="dot" :style="{ background: rule.to }"></span>
            <svg class="remove" viewBox="0 0 18 18"><path d="M1 1L17 17M17 1L1 17" /></svg>
          </div>
          <button class="add">
            <svg viewBox="0 0 24 24"><circle cx="12" cy="12" r="10" /><path d="M8 12h8M12 8v8" /></svg>
          </button>
        </section>
      </aside>
      <main class="plot">
        <canvas ref="canvas" width="3072" height="2047"></canvas>
      </main>
    </div>
  </div>
</template>

<style>
body {
  margin: 0;
  background: #131313;
}
</style>

<style scoped>
.window {
  display: flex;
  flex-direction: column;
  width: 3840px;
  height: 2280px;
  overflow: hidden;
  background: #131313;
  color: #fff;
  font-family: "Noto Sans", "Open Sans", sans-serif;
}
button {
  border: 0;
  padding: 0;
  color: inherit;
  font-family: inherit;
}
.titlebar {
  display: flex;
  align-items: center;
  height: 56px;
  padding: 0 51px 0 2px;
  box-sizing: border-box;
  background: #202020;
}
.logo {
  width: 40px;
  height: 40px;
}
.app-name {
  margin-left: 13px;
  padding-top: 2px;
  color: #808080;
  font-size: 29px;
  line-height: 54px;
  letter-spacing: -0.5px;
}
.controls {
  display: flex;
  gap: 96px;
  margin: 0 0 2px auto;
}
.controls svg {
  width: 20px;
  height: 20px;
  overflow: visible;
  fill: none;
  stroke: #7c7c7c;
  stroke-width: 2;
}
.header {
  display: grid;
  grid-template-columns: 1fr auto 1fr;
  align-items: center;
  height: 156px;
  padding: 0 40px;
  box-sizing: border-box;
  background: #272727;
}
.home {
  width: 60px;
  height: 60px;
  margin-bottom: 16px;
}
.home,
.db svg {
  fill: none;
  stroke: currentColor;
  stroke-width: 2;
  stroke-linecap: round;
  stroke-linejoin: round;
}
h1 {
  margin: 0;
  font-size: 36px;
  font-weight: 400;
  line-height: 50px;
  letter-spacing: 0.4px;
}
.db {
  display: flex;
  align-items: center;
  justify-self: end;
  gap: 20px;
  width: 505px;
  height: 80px;
  margin-top: 4px;
  padding-left: 30px;
  box-sizing: border-box;
  border-radius: 15px;
  background: #3f7a22;
  color: #f2ffdd;
}
.db svg {
  flex: none;
  width: 60px;
  height: 60px;
}
.db span {
  font-size: 30px;
  line-height: 76px;
  letter-spacing: 0.3px;
  white-space: nowrap;
  font-variant-numeric: oldstyle-nums proportional-nums;
}
.body {
  display: flex;
  flex: 1;
  min-height: 0;
}
.sidebar {
  width: 768px;
  box-sizing: border-box;
  background: #131313;
}
.tabs {
  display: flex;
  gap: 20px;
  height: 123px;
  margin: 0 10px;
  background: linear-gradient(#3f3f3f, #3f3f3f) 0 120px / 100% 2px no-repeat;
}
.tab {
  flex: 1;
  box-sizing: border-box;
  padding-bottom: 6px;
  border-bottom: 3px solid transparent;
  background: none;
  color: #8c8c8c;
  font-size: 39px;
  letter-spacing: 0.3px;
}
.tab.active {
  border-color: #efefef;
  color: #fff;
}
.actions {
  display: flex;
  gap: 10px;
  margin: 39px 30px 0;
}
.actions button {
  flex: 1;
  height: 88px;
  padding-bottom: 2px;
  border-radius: 16px;
  background: #1f1f1f;
  font-size: 39px;
  letter-spacing: 0.4px;
}
.settings {
  margin: 20px 50px;
}
.row {
  display: flex;
  align-items: center;
  padding: 20px 20px;
  border-bottom: 2px solid #3f3f3f;
}
.row:last-child {
  border-bottom: 0;
}
.name {
  width: 424px;
  font-size: 34px;
  line-height: 50px;
  letter-spacing: 0.25px;
}
.swatch {
  width: 85px;
  height: 85px;
  border-radius: 14px;
}
.background {
  background: #222;
}
.base {
  background: #310f95;
}
.size {
  width: 160px;
  height: 89px;
  padding: 7px 26px 0;
  box-sizing: border-box;
  border: 2px solid #3f3f3f;
  border-radius: 14px;
  background: transparent;
  color: #fff;
  font: 400 28px "DejaVu Sans", "Noto Sans", sans-serif;
}
.rules {
  display: flex;
  flex-direction: column;
  height: 493px;
  margin: 0 30px;
  padding: 0 40px;
  box-sizing: border-box;
  border: 2px solid #262626;
  border-radius: 28px;
}
h2 {
  margin: 0;
  color: #fafafa;
  font: 700 48px/119px Roboto, Inter, sans-serif;
  letter-spacing: -1.2px;
  text-align: center;
}
.rule {
  position: relative;
  display: flex;
  align-items: center;
  justify-content: center;
  height: 140px;
  border-radius: 28px;
  background: #272727;
}
.rule-label {
  margin: 0 1px 2px 0;
  font-size: 35px;
  letter-spacing: 1.1px;
}
.dot {
  width: 40px;
  height: 40px;
  margin: 8px 0 0 19px;
  border-radius: 50%;
}
.remove {
  position: absolute;
  top: 16px;
  right: 16px;
  width: 18px;
  height: 18px;
  fill: none;
  stroke: #fff;
  stroke-width: 2.500;
  stroke-linecap: round;
}
.add {
  display: flex;
  align-items: center;
  justify-content: center;
  height: 150px;
  margin-top: 40px;
  border: 5px dashed #9ca3af;
  border-radius: 28px;
  background: #272727;
}
.add svg {
  width: 60px;
  height: 60px;
  fill: none;
  stroke: #6b7280;
  stroke-width: 2;
  stroke-linecap: round;
}
.plot {
  width: 3072px;
  height: 2047px;
  background: #222;
}
canvas {
  display: block;
}
</style>
